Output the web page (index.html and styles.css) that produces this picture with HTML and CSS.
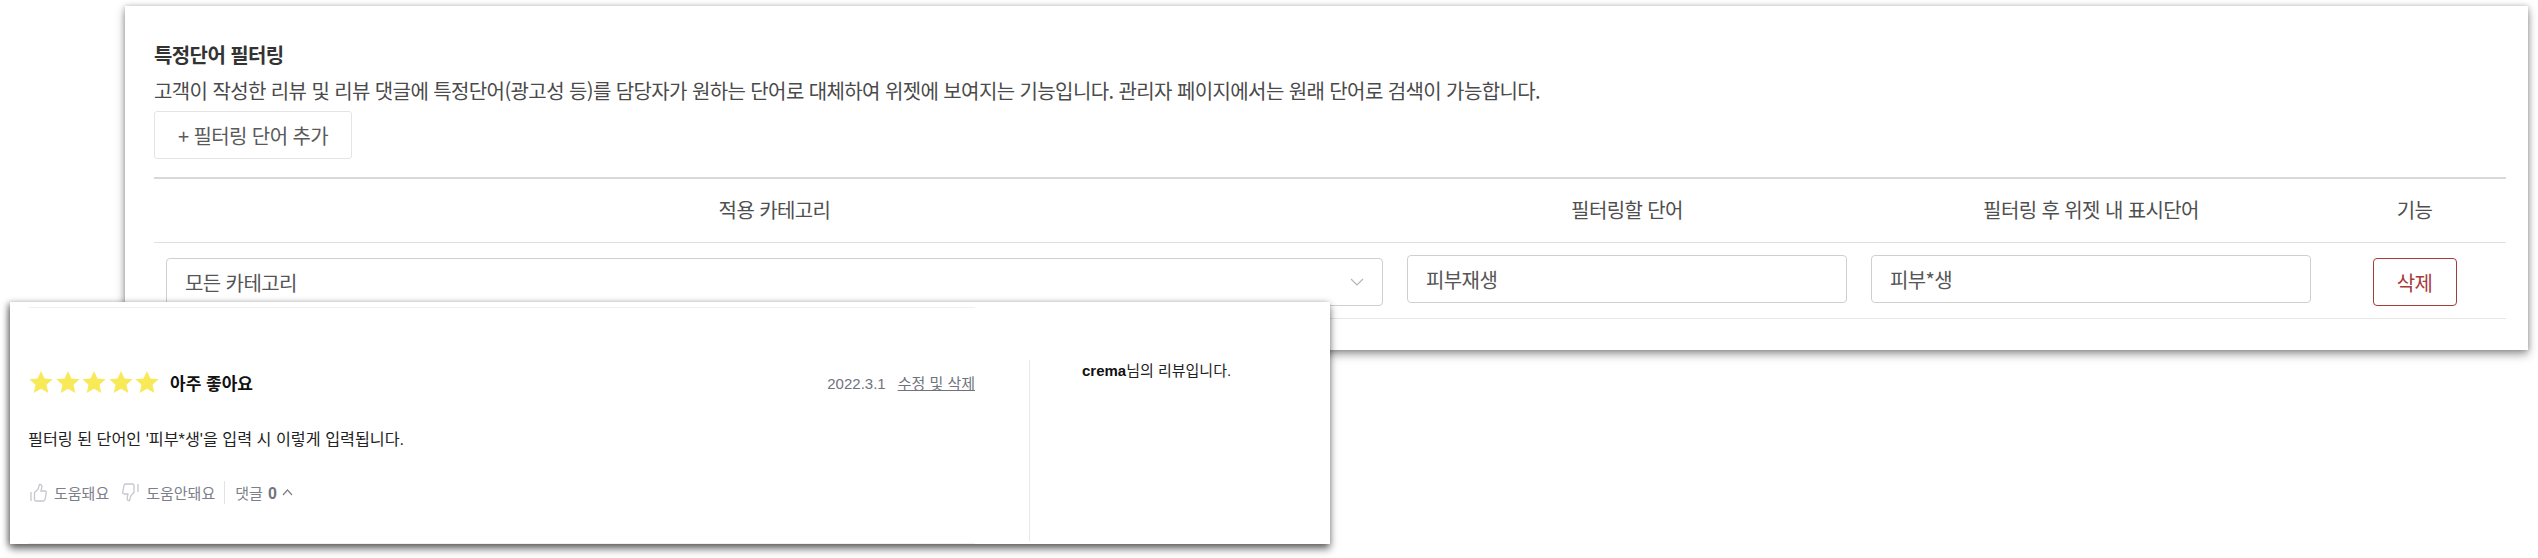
FILE: index.html
```html
<!DOCTYPE html>
<html lang="ko">
<head>
<meta charset="utf-8">
<title>특정단어 필터링</title>
<link rel="stylesheet" href="styles.css">
</head>
<body>
<div class="stage">
  <section class="panel">
    <h2 class="panel-title">특정단어 필터링</h2>
    <p class="panel-desc">고객이 작성한 리뷰 및 리뷰 댓글에 특정단어(광고성 등)를 담당자가 원하는 단어로 대체하여 위젯에 보여지는 기능입니다. 관리자 페이지에서는 원래 단어로 검색이 가능합니다.</p>
    <button class="add-btn">+ 필터링 단어 추가</button>
    <div class="table">
      <div class="row head">
        <div class="cell">적용 카테고리</div>
        <div class="cell">필터링할 단어</div>
        <div class="cell">필터링 후 위젯 내 표시단어</div>
        <div class="cell">기능</div>
      </div>
      <div class="row body-row">
        <div class="cell">
          <div class="select"><span>모든 카테고리</span>
            <svg class="caret" viewBox="0 0 14 8" width="14" height="8"><path d="M1 1l6 6 6-6" fill="none" stroke="#b5b5b5" stroke-width="1.2"/></svg>
          </div>
        </div>
        <div class="cell"><div class="input">피부재생</div></div>
        <div class="cell"><div class="input">피부*생</div></div>
        <div class="cell"><button class="del-btn">삭제</button></div>
      </div>
    </div>
  </section>

  <section class="review">
    <div class="review-main">
      <div class="review-top">
        <div class="stars">
          <svg viewBox="0 0 24 24" width="24" height="24"><polygon points="12,1 15.4,8.4 23.6,9.2 17.5,14.8 19.3,22.9 12,18.8 4.7,22.9 6.5,14.8 .4,9.2 8.6,8.4"/></svg>
          <svg viewBox="0 0 24 24" width="24" height="24"><polygon points="12,1 15.4,8.4 23.6,9.2 17.5,14.8 19.3,22.9 12,18.8 4.7,22.9 6.5,14.8 .4,9.2 8.6,8.4"/></svg>
          <svg viewBox="0 0 24 24" width="24" height="24"><polygon points="12,1 15.4,8.4 23.6,9.2 17.5,14.8 19.3,22.9 12,18.8 4.7,22.9 6.5,14.8 .4,9.2 8.6,8.4"/></svg>
          <svg viewBox="0 0 24 24" width="24" height="24"><polygon points="12,1 15.4,8.4 23.6,9.2 17.5,14.8 19.3,22.9 12,18.8 4.7,22.9 6.5,14.8 .4,9.2 8.6,8.4"/></svg>
          <svg viewBox="0 0 24 24" width="24" height="24"><polygon points="12,1 15.4,8.4 23.6,9.2 17.5,14.8 19.3,22.9 12,18.8 4.7,22.9 6.5,14.8 .4,9.2 8.6,8.4"/></svg>
        </div>
        <strong class="review-title">아주 좋아요</strong>
        <span class="review-meta">2022.3.1<a class="edit-link">수정 및 삭제</a></span>
      </div>
      <p class="review-text">필터링 된 단어인 '피부*생'을 입력 시 이렇게 입력됩니다.</p>
      <div class="actions">
        <svg class="thumb" viewBox="0 0 17 19" width="17" height="19"><path d="M1 9v9M4.5 9.500L8 6.500 9.500 1.500c1.800-.3 2.600 1 2.300 2.700L11 8h4c1 0 1.500.8 1.300 1.700l-1.300 7c-.2.8-.8 1.300-1.600 1.300H6c-.8 0-1.500-.7-1.500-1.500z" fill="none" stroke="#c6c7ce" stroke-width="1.300"/></svg>
        <span class="act">도움돼요</span>
        <svg class="thumb down" viewBox="0 0 17 19" width="17" height="19"><path d="M16 1v8M12 9.500L9 12.500 7.500 17.500c-1.800.3-2.600-1-2.300-2.700L6 11H2c-1 0-1.500-.8-1.300-1.700l1.300-7C2.200 1.500 2.800 1 3.600 1H10.500c.8 0 1.500.7 1.500 1.500z" fill="none" stroke="#c6c7ce" stroke-width="1.300"/></svg>
        <span class="act">도움안돼요</span>
        <span class="sep"></span>
        <span class="act comments">댓글 <b>0</b></span>
        <svg class="chev" viewBox="0 0 11 7" width="11" height="7"><path d="M1 6l4.500-5L10 6" fill="none" stroke="#7d808a" stroke-width="1.200"/></svg>
      </div>
    </div>
    <aside class="review-side"><b>crema</b>님의 리뷰입니다.</aside>
  </section>
</div>
</body>
</html>
```

FILE: styles.css
```css
* { box-sizing: border-box; }
html, body { margin: 0; padding: 0; background: #fff; }
body {
  width: 2538px;
  height: 558px;
  overflow: hidden;
  font-family: "Noto Sans CJK KR", "Noto Sans", sans-serif;
  color: #4a4a4a;
}
.stage { position: relative; width: 2538px; height: 558px; padding: 6px 10px 0 125px; }

.panel {
  width: 2403px;
  height: 344px;
  background: #fff;
  padding: 34px 22px 0 29px;
  box-shadow: 0 4px 9px rgba(0, 0, 0, .42), 0 0 5px rgba(0, 0, 0, .18);
}
.panel-title { margin: 0; font-size: 20px; line-height: 30px; font-weight: 700; color: #333; letter-spacing: -.6px; }
.panel-desc { margin: 6px 0 0; font-size: 20px; line-height: 30px; color: #4a4a4a; letter-spacing: -.6px; white-space: nowrap; }
.add-btn {
  display: block;
  width: 198px;
  height: 48px;
  margin: 5px 0 0;
  padding: 0;
  background: #fff;
  border: 1px solid #e4e4e4;
  border-radius: 3px;
  font: inherit;
  font-size: 20px;
  letter-spacing: -.6px;
  color: #5a5a5a;
}

.table { margin-top: 18px; border-top: 2px solid #d8d8d8; }
.row { display: grid; grid-template-columns: 1241px 464px 464px 183px; }
.head { height: 64px; border-bottom: 1px solid #e0e0e0; align-items: center; text-align: center; font-size: 20px; letter-spacing: -.6px; color: #4f4f4f; padding-bottom: 2px; }
.body-row { height: 76px; border-bottom: 1px solid #e6e6e6; }
.body-row .cell { padding: 0 12px; display: flex; justify-content: center; }

.select {
  width: 100%;
  height: 48px;
  margin-top: 15px;
  padding: 0 18px;
  display: flex;
  align-items: center;
  justify-content: space-between;
  background: #fff;
  border: 1px solid #cfcfcf;
  border-radius: 4px;
  font-size: 20px;
  letter-spacing: -.6px;
  color: #555;
}
.input {
  width: 100%;
  height: 48px;
  margin-top: 12px;
  padding: 0 18px;
  display: flex;
  align-items: center;
  border: 1px solid #cfcfcf;
  border-radius: 4px;
  font-size: 20px;
  letter-spacing: -.6px;
  color: #555;
}
.del-btn {
  width: 84px;
  height: 48px;
  margin-top: 15px;
  padding: 0;
  background: #fff;
  border: 1px solid #a83a3a;
  border-radius: 4px;
  font: inherit;
  font-size: 20px;
  letter-spacing: -.6px;
  color: #a83a3a;
}

.review {
  position: absolute;
  left: 10px;
  top: 302px;
  width: 1320px;
  height: 242px;
  background: #fff;
  display: flex;
  box-shadow: 0 5px 8px rgba(0, 0, 0, .5), -2px 1px 6px rgba(0, 0, 0, .35);
  color: #111;
}
.review-main {
  width: 947px;
  height: 237px;
  margin: 5px 0 0 18px;
  border-top: 1px solid #f0f0f0;
  border-bottom: 1px solid #f0f0f0;
  padding-top: 60px;
}
.review-top { display: flex; align-items: center; height: 28px; }
.stars { display: flex; gap: 2.5px; margin-left: 1px; }
.stars svg { display: block; fill: #f8e958; }
.review-title { margin-left: 11px; font-size: 17px; font-weight: 700; color: #111; }
.review-meta { margin-left: auto; font-family: "Liberation Sans", "Noto Sans CJK KR", sans-serif; font-size: 15px; color: #70737c; }
.edit-link { margin-left: 12px; text-decoration: underline; }
.review-text { margin: 29px 0 0; font-size: 16.2px; line-height: 28px; color: #222; font-family: "Liberation Sans", "Noto Sans CJK KR", sans-serif; }
.actions { display: flex; align-items: center; height: 24px; margin-top: 27px; margin-left: 2px; color: #7d808a; font-size: 15px; }
.thumb { display: block; }
.thumb.down { margin-left: 13px; }
.act { margin-left: 7px; font-family: "Liberation Sans", "Noto Sans CJK KR", sans-serif; }
.sep { width: 1px; height: 23px; margin-left: 9px; background: #e3e3e3; }
.comments { margin-left: 10px; }
.comments b { color: #70737c; margin-left: 1px; font-size: 16px; }
.chev { margin-left: 5px; }

.review-side {
  width: 301px;
  height: 181px;
  margin: 58px 0 0 54px;
  padding: 0 0 0 52px;
  border-left: 1px solid #e8e8e8;
  font-family: "Liberation Sans", "Noto Sans CJK KR", sans-serif;
  font-size: 15px;
  line-height: 22px;
  color: #222;
}
.review-side b { color: #111; }
```
